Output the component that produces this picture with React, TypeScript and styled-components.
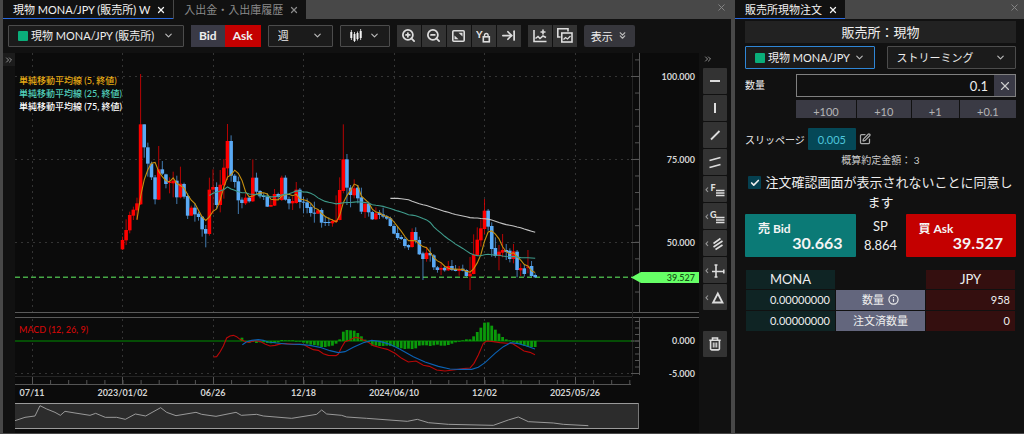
import React from "react";
import styled, { createGlobalStyle, css } from "styled-components";
import {
  ArrowRightToLine,
  Check,
  ChevronDown,
  ChevronsDown,
  ChevronsRight,
  Info,
  SquarePen,
  X,
  ZoomIn,
  ZoomOut,
} from "lucide-react";

const GlobalStyle = createGlobalStyle`
  * { box-sizing: border-box; }
  body {
    margin: 0;
    background: #484848;
    color: #eee;
    font-family: Lato, "Noto Sans CJK JP", sans-serif;
    font-size: 11px;
  }
  button, input, select { font: inherit; color: inherit; }
  button { padding: 0; border: 0; cursor: pointer; }
  svg { display: block; flex: none; }
`;

/* ---------- shell ---------- */

const Workspace = styled.div`
  display: flex;
  gap: 4px;
  min-height: 100vh;
  padding: 0 0 1px 3px;
`;

const Panel = styled.section<{ $side?: boolean }>`
  display: flex;
  flex-direction: column;
  min-width: 0;
  ${(p) => (p.$side ? css`flex: 0 0 289px;` : css`flex: 1;`)}
`;

const PanelBody = styled.div`
  flex: 1;
  background: #111;
`;

const TabBar = styled.div`
  display: flex;
  align-items: flex-start;
  height: 19px;
  background: #484848;
`;

const Tab = styled.div<{ $active?: boolean }>`
  display: flex;
  align-items: center;
  gap: 6px;
  height: 19px;
  padding: 2px 7px 0 10px;
  background: #111;
  border-bottom: 1px solid ${(p) => (p.$active ? "#2a6ae0" : "#111")};
  margin-right: 1px;
  line-height: 16px;
  white-space: nowrap;
  color: ${(p) => (p.$active ? "#f2f2f2" : "#8a8a8a")};
`;

const PlainButton = styled.button`
  display: flex;
  background: none;
`;

const PanelClose = styled(PlainButton)`
  margin: 2px 4px 0 auto;
  color: #8a8a8a;
`;

/* ---------- controls ---------- */

const SelectBox = styled.div<{ $focus?: boolean; $width?: number }>`
  display: flex;
  align-items: center;
  gap: 3px;
  height: ${(p) => (p.$width ? 22 : 23)}px;
  ${(p) => (p.$width ? css`width: ${p.$width}px;` : css`flex: 1;`)}
  min-width: 0;
  padding: 0 9px;
  background: #1b1b1b;
  border: 1px solid ${(p) => (p.$focus ? "#2f86d6" : "#4c4c4c")};
  border-radius: 1px;
`;

const Select = styled.select`
  flex: 1;
  min-width: 0;
  height: 100%;
  padding: 0;
  border: 0;
  outline: 0;
  background: #1b1b1b;
  appearance: none;
`;

const Swatch = styled.span`
  flex: none;
  width: 10px;
  height: 10px;
  background: #0aae7a;
  border-radius: 1px;
`;

interface PickerProps {
  label: string;
  value: string;
  swatch?: boolean;
  focus?: boolean;
  width?: number;
}

function Picker({ label, value, swatch, focus, width }: PickerProps) {
  return (
    <SelectBox $focus={focus} $width={width}>
      {swatch && <Swatch />}
      <Select aria-label={label} defaultValue={value}>
        <option>{value}</option>
      </Select>
      <ChevronDown size={11} color="#bbb" strokeWidth={2.5} />
    </SelectBox>
  );
}

/* ---------- toolbar ---------- */

const Toolbar = styled.div`
  display: flex;
  align-items: center;
  gap: 7px;
  height: 34px;
  padding: 0 5px 1px;
`;

const ButtonGroup = styled.div<{ $gap?: number }>`
  display: flex;
  gap: ${(p) => p.$gap ?? 0}px;
`;

const SideButton = styled.button<{ $on?: boolean }>`
  height: 22px;
  padding: 0 8px;
  background: ${(p) => (p.$on ? "#c40000" : "#3a3a46")};
  font-size: 12px;
  font-weight: 700;
`;

const IconButton = styled.button`
  display: flex;
  align-items: center;
  justify-content: center;
  width: 24px;
  height: 22px;
  background: #333;
  color: #ddd;
`;

const TypeButton = styled.button`
  display: flex;
  align-items: center;
  justify-content: space-between;
  width: 50px;
  height: 22px;
  padding: 0 9px;
  background: #1b1b1b;
  border: 1px solid #4c4c4c;
  border-radius: 1px;
`;

const DisplayButton = styled.button`
  display: flex;
  align-items: center;
  gap: 4px;
  height: 22px;
  padding: 0 7px;
  background: #36363c;
  border-radius: 2px;
`;

/* ---------- chart area ---------- */

const ChartRow = styled.div`
  display: grid;
  grid-template-columns: 12px minmax(0, 1fr) 32px;
  align-items: start;
`;

const Expander = styled(PlainButton)`
  align-items: center;
  justify-content: center;
  height: 13px;
  background: #1c1c1c;
  color: #aaa;
`;

const ChartSvg = styled.svg`
  width: 100%;
  height: auto;
  background: #0b0b0b;
  font-size: 9px;
  font-weight: 500;
`;

const AxisLabels = styled.g`
  fill: #d4d4d4;
  font-weight: 700;
`;

const ToolColumn = styled.div`
  display: flex;
  flex-direction: column;
  gap: 1px;
  padding: 0 4px;
`;

const ToolCollapse = styled(PlainButton)`
  height: 14px;
  padding-bottom: 2px;
  align-items: center;
  color: #aaa;
`;

const ToolButton = styled.button<{ $apart?: boolean }>`
  display: flex;
  align-items: center;
  justify-content: center;
  height: 26px;
  margin-top: ${(p) => (p.$apart ? 20 : 0)}px;
  background: #333;
  color: #ddd;
  border-radius: 1px;
`;

/* ---------- order form ---------- */

const OrderForm = styled.form`
  display: flex;
  flex-direction: column;
  padding: 2px 8px 0 10px;
`;

const FormTitle = styled.h1`
  margin: 0 0 3px;
  height: 22px;
  background: #222;
  font-size: 13px;
  font-weight: 400;
  line-height: 22px;
  text-align: center;
`;

const PickerRow = styled.div`
  display: flex;
  gap: 12px;
  margin-bottom: 5px;
`;

const AmountRow = styled.div`
  display: grid;
  grid-template-columns: 51px minmax(0, 1fr);
  row-gap: 3px;
  font-size: 10px;
  line-height: 23px;
`;

const AmountField = styled.div`
  display: flex;
  height: 23px;
  border: 1px solid #808080;
`;

const AmountInput = styled.input`
  flex: 1;
  min-width: 0;
  padding: 2px 6px 0;
  border: 0;
  outline: 0;
  background: #101010;
  font-size: 13px;
  text-align: right;
`;

const ClearButton = styled.button`
  display: flex;
  align-items: center;
  justify-content: center;
  width: 21px;
  background: #3a3a46;
  color: #ccc;
`;

const StepRow = styled.div`
  grid-column: 2;
  display: flex;
  gap: 1px;
`;

const StepButton = styled.button`
  flex: 1 1 auto;
  height: 18px;
  background: #3a3a44;
  color: #b4b4b4;
  font-size: 11px;
`;

const SlippageRow = styled.div`
  display: flex;
  align-items: center;
  gap: 3px;
  margin-top: 10px;
  font-size: 10px;
`;

const SlippageValue = styled.button`
  height: 22px;
  padding: 0 10px;
  background: #054857;
  border-radius: 1px;
  color: #4ec6dc;
  font-size: 11px;
`;

const Estimate = styled.p`
  margin: 2px 0 0;
  color: #ccc;
  font-size: 10px;
  line-height: 16px;
  text-align: center;
`;

const Agreement = styled.label`
  margin-top: 4px;
  font-size: 13px;
  line-height: 20px;
  text-align: center;
`;

const TickBox = styled.span`
  display: inline-grid;
  width: 13px;
  height: 13px;
  margin-right: 4px;
  vertical-align: -2px;
  place-items: center;
  background: #054050;
  border-radius: 1px;
  > * { grid-area: 1 / 1; pointer-events: none; }
`;

const TickInput = styled.input`
  appearance: none;
  width: 13px;
  height: 13px;
  margin: 0;
  && { pointer-events: auto; }
`;

const QuoteRow = styled.div`
  display: grid;
  grid-template-columns: 1fr 50px 1fr;
  margin-top: 2px;
`;

const QuoteButton = styled.button<{ $side: "bid" | "ask" }>`
  display: flex;
  flex-direction: column;
  align-items: flex-start;
  height: 43px;
  padding: 7px 13px 0;
  background: ${(p) => (p.$side === "bid" ? "#0b7a76" : "#c40000")};
  border-radius: 1px;
  color: #f4f4f4;
  font-size: 12px;
  font-weight: 700;
  line-height: 15px;
`;

const QuotePrice = styled.span`
  align-self: flex-end;
  font-size: 16px;
  line-height: 14px;
`;

const Spread = styled.div`
  padding-top: 3px;
  font-size: 13px;
  line-height: 19px;
  text-align: center;
`;

const Balances = styled.table`
  width: 100%;
  margin-top: 12px;
  border-collapse: separate;
  border-spacing: 1px;
  table-layout: fixed;
  font-size: 11px;
  line-height: 20px;
`;

const Cell = styled.td<{ $tone: "teal" | "grey" | "red" }>`
  height: 20px;
  padding: 0 5px;
  text-align: right;
  background: ${(p) => ({ teal: "#0f2424", grey: "#63667d", red: "#340f0f" })[p.$tone]};
`;

const HeadCell = styled(Cell)`
  height: 19px;
  font-size: 13px;
  font-weight: 400;
  line-height: 19px;
  text-align: center;
`;

const RowLabel = styled(Cell)`
  font-weight: 400;
  text-align: center;
`;

const InfoIcon = styled(Info)`
  display: inline-block;
  vertical-align: -1px;
  margin-left: 4px;
`;

/* ---------- chart data ---------- */

// Weekly quotes: [rising, high, body top, body bottom, low], counted down in
// thirds of a pixel from the top of the price scale.
type Quote = [0 | 1, number, number, number, number];

const quotes: Quote[] = [
  [1, 530, 540, 568, 570], [1, 478, 510, 541, 555], [1, 455, 465, 511, 520], [1, 440, 449, 467, 480],
  [1, 413, 430, 451, 480], [1, 42, 193, 433, 435], [0, 193, 193, 262, 293], [0, 248, 262, 311, 350],
  [0, 305, 311, 352, 360], [0, 345, 352, 418, 433], [1, 258, 328, 419, 420], [0, 303, 328, 341, 345],
  [0, 341, 343, 372, 385], [1, 352, 366, 369, 400], [1, 335, 362, 370, 412], [0, 347, 362, 412, 432],
  [1, 320, 371, 412, 415], [0, 368, 372, 410, 416], [0, 400, 408, 467, 477], [1, 437, 443, 467, 468],
  [0, 430, 443, 463, 485], [0, 455, 461, 471, 482], [0, 468, 470, 508, 530], [0, 495, 507, 521, 562],
  [1, 353, 389, 522, 527], [1, 328, 381, 389, 462], [0, 367, 381, 435, 447], [1, 330, 374, 435, 457],
  [1, 297, 323, 376, 416], [1, 192, 243, 325, 360], [0, 226, 243, 347, 365], [0, 342, 347, 366, 383],
  [0, 350, 364, 421, 462], [0, 412, 419, 429, 445], [1, 400, 413, 430, 435], [0, 408, 413, 424, 428],
  [1, 298, 353, 424, 426], [0, 338, 353, 395, 402], [0, 390, 393, 409, 415], [0, 400, 407, 411, 420],
  [0, 400, 410, 440, 441], [1, 420, 435, 440, 441], [1, 387, 402, 437, 438], [0, 398, 402, 411, 420],
  [1, 347, 353, 420, 423], [0, 346, 353, 419, 422], [0, 410, 417, 430, 448], [1, 410, 423, 430, 450],
  [1, 366, 389, 429, 431], [0, 384, 389, 426, 445], [0, 410, 425, 428, 460], [0, 415, 427, 444, 460],
  [0, 430, 441, 459, 470], [0, 425, 458, 461, 488], [1, 448, 451, 461, 462], [0, 445, 450, 488, 503],
  [0, 470, 486, 489, 498], [0, 472, 486, 489, 498], [1, 477, 483, 490, 500], [1, 406, 480, 486, 488],
  [1, 352, 390, 480, 481], [1, 193, 298, 393, 400], [0, 282, 298, 383, 435], [0, 375, 383, 405, 442],
  [1, 358, 385, 406, 415], [0, 375, 383, 415, 430], [0, 383, 412, 455, 462], [1, 425, 431, 456, 474],
  [0, 425, 431, 457, 470], [0, 452, 456, 478, 480], [1, 442, 460, 478, 480], [0, 450, 458, 465, 477],
  [0, 443, 463, 470, 475], [0, 465, 469, 476, 480], [0, 470, 475, 498, 500], [0, 492, 498, 521, 522],
  [0, 500, 519, 534, 540], [0, 525, 531, 537, 540], [0, 532, 537, 558, 565], [0, 553, 555, 562, 570],
  [1, 505, 516, 561, 563], [0, 502, 516, 541, 550], [0, 530, 540, 583, 585], [0, 575, 580, 597, 660],
  [1, 560, 578, 597, 605], [0, 562, 579, 586, 605], [0, 582, 586, 622, 630], [0, 618, 622, 630, 638],
  [1, 608, 624, 629, 645], [0, 618, 623, 631, 635], [1, 603, 618, 631, 633], [0, 600, 618, 630, 633],
  [0, 615, 627, 633, 634], [1, 618, 628, 633, 647], [0, 614, 626, 632, 634], [0, 628, 630, 648, 650],
  [1, 591, 641, 649, 690], [1, 523, 584, 642, 643], [1, 502, 539, 587, 588], [1, 478, 505, 541, 560],
  [1, 417, 452, 507, 522], [0, 447, 452, 500, 512], [0, 487, 498, 567, 590], [0, 532, 564, 588, 593],
  [1, 555, 575, 588, 631], [1, 522, 570, 578, 592], [0, 552, 570, 576, 600], [0, 565, 572, 597, 607],
  [1, 552, 574, 597, 610], [0, 570, 575, 630, 652], [1, 610, 624, 631, 648], [0, 613, 625, 642, 650],
  [1, 570, 620, 623, 640], [0, 603, 618, 648, 650], [0, 640, 645, 652, 653],
];

// MACD minus signal, one bar per week from week 33 on, in thirds of a pixel.
const histogram = [
  10, 0, -6, -3, -6, -4, -4, -6, -7, -6, -4, 3, 2, 2, 2, -2, -2, -5, -8, -11, -12, -14, -18, -18, -16, -14, -8,
  5, 28, 33, 32, 31, 24, 14, 4, -4, -14, -14, -15, -15, -14, -15, -17, -20, -22, -24, -23, -24, -22, -14, -13,
  -13, -15, -13, -11, -14, -14, -12, -8, -4, -2, 2, 5, 5, 14, 27, 40, 55, 56, 46, 34, 22, 12, 5, 2, -3, -6, -9,
  -14, -18, -18, -18,
];

const macdLine =
  "640,141 650,140 660,126 670,108 680,84 690,78 700,76 710,80 720,88 732,93 745,97 765,92 780,94 795,102 810,108 825,106 845,101 860,101 880,103 900,103 912,104 925,112 940,119 955,121 970,131 985,136 1008,137 1015,132 1025,112 1035,95 1050,90 1065,82 1078,84 1090,90 1105,97 1120,107 1145,114 1162,118 1185,130 1205,145 1225,156 1248,153 1270,166 1288,169 1310,180 1335,183 1360,180 1390,176 1410,174 1422,160 1435,135 1450,100 1460,93 1475,94 1500,98 1538,101 1555,112 1572,123 1590,127 1605,134";

const signalLine =
  "727,104 740,95 755,91 775,89 790,91 805,96 830,99 860,102 900,103 930,106 960,112 990,122 1015,128 1035,125 1060,112 1090,98 1115,91 1140,94 1170,103 1200,118 1240,140 1275,156 1315,169 1350,177 1380,178 1415,178 1435,172 1455,158 1485,130 1510,110 1532,98 1555,101 1580,108 1605,117";

const overviewLine =
  "45,332 75,322 105,318 120,287 140,297 165,307 181,316 195,304 225,309 270,316 287,310 316,322 350,322 376,328 406,312 437,318 482,293 500,307 528,317 588,307 605,313 648,319 708,307 724,316 770,313 790,318 875,325 900,321 950,313 965,300 980,312 1025,316 1040,321 1100,325 1222,334 1252,328 1285,338 1345,343 1480,346 1525,330 1555,321 1585,335 1660,339 1690,343 1765,347";

const weekX = (i: number) => 122.5 + 3.62 * i;
const quoteY = (v: number) => 60 + v / 3;

const closes = quotes.map(([up, , top, bottom]) => (up ? top : bottom));

function movingAverage(span: number) {
  const points: string[] = [];
  for (let i = span - 1; i < closes.length; i++) {
    const sum = closes.slice(i - span + 1, i + 1).reduce((a, b) => a + b, 0);
    points.push(`${weekX(i).toFixed(1)},${quoteY(sum / span).toFixed(1)}`);
  }
  return points.join(" ");
}

const dates: [string, number][] = [
  ["07/11", 32], ["2023/01/02", 122.5], ["06/26", 213], ["12/18", 303.5],
  ["2024/06/10", 394], ["12/02", 484.5], ["2025/05/26", 575],
];
const prices: [string, number][] = [["100.000", 76.5], ["75.000", 159.5], ["50.000", 242.5]];
const legend: [string, string][] = [
  ["単純移動平均線 (5, 終値)", "#e6aa14"],
  ["単純移動平均線 (25, 終値)", "#52d0bc"],
  ["単純移動平均線 (75, 終値)", "#fff"],
];
const range = (n: number) => Array.from({ length: n }, (_, i) => i);

function Chart() {
  return (
    <ChartSvg viewBox="15 53 684 380" role="img" aria-label="MONA/JPY 週足チャート">
      <g stroke="#343434" strokeDasharray="2 4">
        {dates.map(([d, x]) => (
          <path key={d} d={`M${Math.floor(x) + 0.5} 53V312M${Math.floor(x) + 0.5} 319V376`} />
        ))}
        {prices.map(([p, y]) => (
          <path key={p} d={`M15 ${y}H631`} />
        ))}
        <path d="M15 373.5H631" />
      </g>

      <path d="M15 277.3H632" stroke="#46a846" strokeWidth={1.4} strokeDasharray="5 3" />

      <g>
        {quotes.map(([up, high, top, bottom, low], i) => (
          <g key={i} fill={up ? "#f00" : "#5aaaf5"}>
            <rect
              x={weekX(i) - 0.5}
              y={quoteY(high)}
              width={1}
              height={(low - high) / 3}
              opacity={0.7}
            />
            <rect x={weekX(i) - 1.8} y={quoteY(top)} width={3.6} height={(bottom - top) / 3} />
          </g>
        ))}
      </g>
      <g fill="none" strokeWidth={1.1}>
        <polyline points={movingAverage(5)} stroke="#c8900f" />
        <polyline points={movingAverage(25)} stroke="#3f9c8c" />
        <polyline points={movingAverage(75)} stroke="#c4c4c4" />
      </g>
      {legend.map(([text, color], i) => (
        <text key={text} x={19} y={84 + i * 13} fill={color}>
          {text}
        </text>
      ))}

      <path d="M15 312.5H699M15 317.5H699" stroke="#5a5a5a" />

      <path d="M15 341H634" stroke="#046404" strokeWidth={1.5} />
      <g fill="#0a9a0a">
        {histogram.map((v, i) => (
          <rect
            key={i}
            x={weekX(i + 33) - 1.4}
            y={v > 0 ? 341 - v / 3 : 341}
            width={2.8}
            height={Math.abs(v) / 3}
          />
        ))}
      </g>
      <g fill="none" strokeWidth={3.4} transform="translate(0 310) scale(0.33333)">
        <polyline points={macdLine} stroke="#b80808" />
        <polyline points={signalLine} stroke="#0b62b4" />
      </g>
      <text x={19} y={333} fill="#d00808">
        MACD (12, 26, 9)
      </text>

      <path d="M632.5 53V376M15 376.5H632" stroke="#242424" />
      <g stroke="#555">
        <path d="M639.5 53V312M639.5 318V375M15 384.5H631" />
        {range(15).map((i) => (
          <path key={i} d={`M635 ${59.9 + i * 16.58}H639`} />
        ))}
        {prices.map(([p, y]) => (
          <path key={p} d={`M631 ${y}H639`} />
        ))}
        {range(9).map((i) => (
          <path key={i} d={`M635 ${321.5 + i * 6.5}H639`} />
        ))}
        <path d="M631 341H639M631 373.5H639" />
        {range(34).map((i) => (
          <path key={i} d={`M${32.5 + i * 18.1} 380V384`} />
        ))}
        {dates.map(([d, x]) => (
          <path key={d} d={`M${Math.floor(x) + 0.5} 377V384`} />
        ))}
      </g>

      <AxisLabels textAnchor="end">
        {prices.map(([p, y]) => (
          <text key={p} x={695} y={y + 3}>
            {p}
          </text>
        ))}
        <text x={695} y={344}>0.000</text>
        <text x={695} y={377}>-5.000</text>
      </AxisLabels>
      <AxisLabels textAnchor="middle">
        {dates.map(([d, x]) => (
          <text key={d} x={x} y={396}>
            {d}
          </text>
        ))}
      </AxisLabels>

      <path d="M631 277.5L641 272H699V283H641Z" fill="#66ff66" />
      <text x={695} y={281} fill="#155015" textAnchor="end">
        39.527
      </text>

      <rect x={15} y={403} width={623} height={25} fill="#2c2c2c" />
      <path d="M15 403.5H638M15 428.5H638" stroke="#9a9a9a" />
      <path d="M638.5 403V429" stroke="#777" />
      <polyline
        points={overviewLine}
        transform="translate(0 310) scale(0.33333)"
        fill="none"
        stroke="#9a9a9a"
        strokeWidth={3}
      />
    </ChartSvg>
  );
}

/* ---------- icons ---------- */

const stroke = { fill: "none", stroke: "currentColor", strokeWidth: 1.6 };

const CandleIcon = () => (
  <svg width="12" height="13" viewBox="0 0 12 13" fill="#f2f2f2">
    <path d="M.3 3h2v6h-2zM3.500 5h2v7h-2zM6.500 4h2v6h-2zM9.700 2h2v7h-2z" />
    <path d="M.9 1h.8v10H.9zM4.100 3h.8v10h-.8zM7.100 2.500h.8v9h-.8zM10.300 0h.8v11h-.8z" />
  </svg>
);

const FitIcon = () => (
  <svg width="13" height="12" viewBox="0 0 13 12" {...stroke}>
    <rect x="0.8" y="0.8" width="11.400" height="10.400" rx="1" />
    <path d="M6.500 2.700h4v3.800zM6.500 9.300h-4V5.500z" fill="currentColor" stroke="none" />
  </svg>
);

const LockYIcon = () => (
  <svg width="15" height="14" viewBox="0 0 15 14">
    <text x="0" y="9" fill="currentColor" fontSize="10" fontWeight="900">
      Y
    </text>
    <rect x="7.300" y="7.800" width="6" height="5" {...stroke} />
    <path d="M8.500 7.500V6.300a1.800 1.800 0 0 1 3.600 0V7.500" {...stroke} strokeWidth="1.400" />
  </svg>
);

const AddIndicatorIcon = () => (
  <svg width="14" height="14" viewBox="0 0 14 14" {...stroke}>
    <path d="M1 1v11.500h12.500M2.500 9.500l2.500-2 2 2 3-2.500 3 1.500M10 .5v5M7.500 3h5" />
  </svg>
);

const CompareIcon = () => (
  <svg width="16" height="15" viewBox="0 0 16 15" {...stroke}>
    <path d="M3.500 9H.8V.8H11V3.500" />
    <rect x="4.800" y="5" width="10.200" height="9" />
    <path d="M6.500 11.500l2-2 2 1.500 3-3" strokeWidth="1.300" />
  </svg>
);

const More = () => <path d="M5 11.500L3 13.700 5 16" stroke="#999" strokeWidth="1.100" />;

const Levels = () => <path d="M13 14.500h8.500M13 17h8.500M13 19.500h8.500" strokeWidth="1.500" />;

const toolIcons: [string, React.ReactNode][] = [
  ["水平線", <path d="M7 13h10" strokeWidth="2" />],
  ["垂直線", <path d="M12 8v10" strokeWidth="2" />],
  ["トレンドライン", <path d="M8 17.500l8.500-8.500" strokeWidth="1.800" />],
  ["平行線", <path d="M6.500 11.500l11-3M6.500 18.500l11-3" strokeWidth="1.800" />],
  [
    "フィボナッチ",
    <>
      <More />
      <text x="7.500" y="14.500" fill="currentColor" stroke="none" fontSize="9" fontWeight="900">
        F
      </text>
      <Levels />
    </>,
  ],
  [
    "ギャン",
    <>
      <More />
      <text x="7" y="14.500" fill="currentColor" stroke="none" fontSize="9" fontWeight="900">
        G
      </text>
      <Levels />
    </>,
  ],
  [
    "チャネル",
    <>
      <More />
      <path d="M10.500 13.500l7-5M10.500 17l9-6M12.500 19.500l7-4.500" />
    </>,
  ],
  [
    "測定",
    <>
      <More />
      <path d="M13 8v12M11.500 8h3M11.500 20h3M9 14.500h12M20.800 12.500v4" />
    </>,
  ],
  [
    "図形",
    <>
      <More />
      <path d="M14.800 9.500l4.700 9h-9.400z" strokeWidth="1.800" />
    </>,
  ],
];

const TrashIcon = () => (
  <svg width="12" height="14" viewBox="0 0 12 14" {...stroke}>
    <path d="M.3 3.300h11.400M3.500 3.300V1h5v2.300M1.600 3.300v8.400a1.200 1.200 0 0 0 1.200 1.200h6.400a1.200 1.200 0 0 0 1.200-1.200V3.300" />
    <path d="M4.300 5.500v5M6 5.500v5M7.700 5.500v5" strokeWidth="1.100" />
  </svg>
);

/* ---------- page ---------- */

export default function App() {
  return (
    <>
      <GlobalStyle />
      <Workspace>
        <Panel>
          <TabBar>
            <Tab $active>
              現物 MONA/JPY (販売所) W
              <PlainButton aria-label="タブを閉じる">
                <X size={10} strokeWidth={3} />
              </PlainButton>
            </Tab>
            <Tab>
              入出金・入出庫履歴
              <PlainButton aria-label="タブを閉じる">
                <X size={10} strokeWidth={3} />
              </PlainButton>
            </Tab>
            <PanelClose aria-label="パネルを閉じる">
              <X size={11} strokeWidth={2} />
            </PanelClose>
          </TabBar>
          <PanelBody>
            <Toolbar>
              <Picker label="銘柄" value="現物 MONA/JPY (販売所)" swatch width={176} />
              <ButtonGroup>
                <SideButton>Bid</SideButton>
                <SideButton $on>Ask</SideButton>
              </ButtonGroup>
              <Picker label="足種" value="週" width={65} />
              <TypeButton aria-label="チャートタイプ">
                <CandleIcon />
                <ChevronDown size={11} color="#bbb" strokeWidth={2.5} />
              </TypeButton>
              <ButtonGroup $gap={1}>
                <IconButton aria-label="拡大"><ZoomIn size={15} strokeWidth={2.8} /></IconButton>
                <IconButton aria-label="縮小"><ZoomOut size={15} strokeWidth={2.8} /></IconButton>
                <IconButton aria-label="全体表示"><FitIcon /></IconButton>
                <IconButton aria-label="Y軸固定"><LockYIcon /></IconButton>
                <IconButton aria-label="最新へ移動"><ArrowRightToLine size={15} strokeWidth={2.8} /></IconButton>
              </ButtonGroup>
              <ButtonGroup $gap={1}>
                <IconButton aria-label="指標を追加"><AddIndicatorIcon /></IconButton>
                <IconButton aria-label="比較"><CompareIcon /></IconButton>
              </ButtonGroup>
              <DisplayButton>
                表示
                <ChevronsDown size={11} color="#bbb" strokeWidth={2.5} />
              </DisplayButton>
            </Toolbar>
            <ChartRow>
              <Expander aria-label="一覧を開く"><ChevronsRight size={10} /></Expander>
              <Chart />
              <ToolColumn>
                <ToolCollapse aria-label="描画ツールを畳む"><ChevronsRight size={10} /></ToolCollapse>
                {toolIcons.map(([name, icon]) => (
                  <ToolButton key={name} aria-label={name}>
                    <svg width="24" height="26" viewBox="0 0 24 26" {...stroke}>
                      {icon}
                    </svg>
                  </ToolButton>
                ))}
                <ToolButton $apart aria-label="描画を削除"><TrashIcon /></ToolButton>
              </ToolColumn>
            </ChartRow>
          </PanelBody>
        </Panel>

        <Panel $side>
          <TabBar>
            <Tab $active>
              販売所現物注文
              <PlainButton aria-label="タブを閉じる">
                <X size={10} strokeWidth={3} />
              </PlainButton>
            </Tab>
            <PanelClose aria-label="パネルを閉じる">
              <X size={11} strokeWidth={2} />
            </PanelClose>
          </TabBar>
          <PanelBody>
            <OrderForm onSubmit={(e) => e.preventDefault()}>
              <FormTitle>販売所：現物</FormTitle>
              <PickerRow>
                <Picker label="銘柄" value="現物 MONA/JPY" swatch focus />
                <Picker label="注文方法" value="ストリーミング" />
              </PickerRow>
              <AmountRow>
                <label htmlFor="amount">数量</label>
                <AmountField>
                  <AmountInput id="amount" defaultValue="0.1" />
                  <ClearButton type="button" aria-label="クリア"><X size={14} /></ClearButton>
                </AmountField>
                <StepRow>
                  {["+100", "+10", "+1", "+0.1"].map((s) => (
                    <StepButton key={s} type="button">{s}</StepButton>
                  ))}
                </StepRow>
              </AmountRow>
              <SlippageRow>
                スリッページ
                <SlippageValue type="button">0.005</SlippageValue>
                <PlainButton type="button" aria-label="スリッページを編集">
                  <SquarePen size={12} color="#aaa" strokeWidth={2.5} />
                </PlainButton>
              </SlippageRow>
              <Estimate>概算約定金額： 3</Estimate>
              <Agreement>
                <TickBox>
                  <TickInput type="checkbox" defaultChecked />
                  <Check size={10} strokeWidth={4} />
                </TickBox>
                注文確認画面が表示されないことに同意します
              </Agreement>
              <QuoteRow>
                <QuoteButton type="button" $side="bid">
                  売 Bid
                  <QuotePrice>30.663</QuotePrice>
                </QuoteButton>
                <Spread>
                  <div>SP</div>
                  <div>8.864</div>
                </Spread>
                <QuoteButton type="button" $side="ask">
                  買 Ask
                  <QuotePrice>39.527</QuotePrice>
                </QuoteButton>
              </QuoteRow>
              <Balances>
                <thead>
                  <tr>
                    <HeadCell as="th" $tone="teal">MONA</HeadCell>
                    <td />
                    <HeadCell as="th" $tone="red">JPY</HeadCell>
                  </tr>
                </thead>
                <tbody>
                  <tr>
                    <Cell $tone="teal">0.00000000</Cell>
                    <RowLabel as="th" $tone="grey">
                      数量
                      <InfoIcon size={11} strokeWidth={2.5} />
                    </RowLabel>
                    <Cell $tone="red">958</Cell>
                  </tr>
                  <tr>
                    <Cell $tone="teal">0.00000000</Cell>
                    <RowLabel as="th" $tone="grey">注文済数量</RowLabel>
                    <Cell $tone="red">0</Cell>
                  </tr>
                </tbody>
              </Balances>
            </OrderForm>
          </PanelBody>
        </Panel>
      </Workspace>
    </>
  );
}
